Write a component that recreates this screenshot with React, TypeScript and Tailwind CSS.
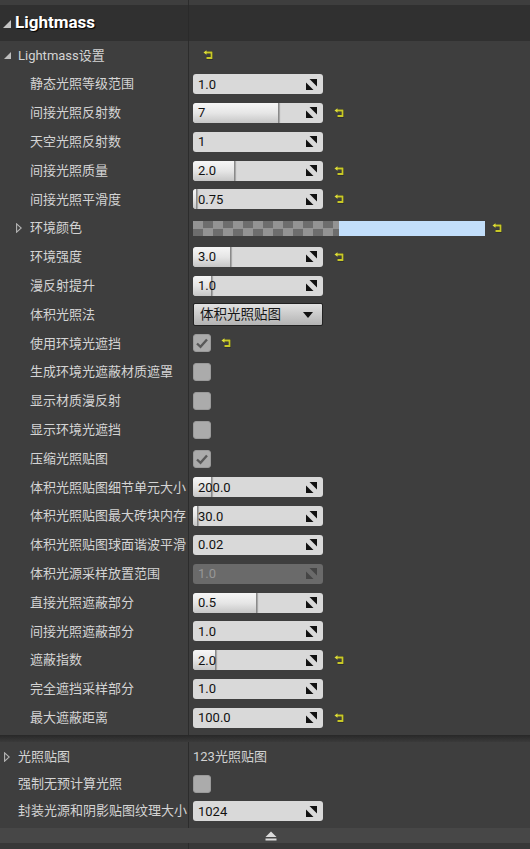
import React from 'react';

type Field =
  | { kind: 'num'; value: string; fill?: number; disabled?: boolean }
  | { kind: 'check'; checked: boolean }
  | { kind: 'color' }
  | { kind: 'combo'; value: string }
  | { kind: 'text'; value: string };

type Row = {
  label: string;
  level: number;
  arrow?: 'open' | 'closed';
  field?: Field;
  reset?: boolean;
};

const lightmassRows: Row[] = [
  { label: 'Lightmass设置', level: 1, arrow: 'open', reset: true },
  { label: '静态光照等级范围', level: 2, field: { kind: 'num', value: '1.0' } },
  { label: '间接光照反射数', level: 2, field: { kind: 'num', value: '7', fill: 86 }, reset: true },
  { label: '天空光照反射数', level: 2, field: { kind: 'num', value: '1' } },
  { label: '间接光照质量', level: 2, field: { kind: 'num', value: '2.0', fill: 42 }, reset: true },
  { label: '间接光照平滑度', level: 2, field: { kind: 'num', value: '0.75', fill: 4 }, reset: true },
  { label: '环境颜色', level: 2, arrow: 'closed', field: { kind: 'color' }, reset: true },
  { label: '环境强度', level: 2, field: { kind: 'num', value: '3.0', fill: 38 }, reset: true },
  { label: '漫反射提升', level: 2, field: { kind: 'num', value: '1.0', fill: 19 } },
  { label: '体积光照法', level: 2, field: { kind: 'combo', value: '体积光照贴图' } },
  { label: '使用环境光遮挡', level: 2, field: { kind: 'check', checked: true }, reset: true },
  { label: '生成环境光遮蔽材质遮罩', level: 2, field: { kind: 'check', checked: false } },
  { label: '显示材质漫反射', level: 2, field: { kind: 'check', checked: false } },
  { label: '显示环境光遮挡', level: 2, field: { kind: 'check', checked: false } },
  { label: '压缩光照贴图', level: 2, field: { kind: 'check', checked: true } },
  { label: '体积光照贴图细节单元大小', level: 2, field: { kind: 'num', value: '200.0', fill: 19 } },
  { label: '体积光照贴图最大砖块内存', level: 2, field: { kind: 'num', value: '30.0', fill: 5 } },
  { label: '体积光照贴图球面谐波平滑', level: 2, field: { kind: 'num', value: '0.02' } },
  { label: '体积光源采样放置范围', level: 2, field: { kind: 'num', value: '1.0', disabled: true } },
  { label: '直接光照遮蔽部分', level: 2, field: { kind: 'num', value: '0.5', fill: 64 } },
  { label: '间接光照遮蔽部分', level: 2, field: { kind: 'num', value: '1.0' } },
  { label: '遮蔽指数', level: 2, field: { kind: 'num', value: '2.0', fill: 23 }, reset: true },
  { label: '完全遮挡采样部分', level: 2, field: { kind: 'num', value: '1.0' } },
  { label: '最大遮蔽距离', level: 2, field: { kind: 'num', value: '100.0' }, reset: true },
];

const ResetArrow = () => (
  <svg width="10" height="10" viewBox="0 0 10 10" className="shrink-0">
    <path d="M3 2.5H8.5V8.2H3.5" stroke="#1e1e1e" strokeWidth="3" fill="none" opacity="0.5" />
    <path d="M3 2.5H8.5V8H3.5" stroke="#c8c826" strokeWidth="1.8" fill="none" />
    <polygon points="0.5,2.5 3.5,0.3 3.5,4.7" fill="#dede3a" />
  </svg>
);

const Spinner = ({ muted }: { muted?: boolean }) => (
  <svg width="11" height="11" viewBox="0 0 11 11" className="shrink-0">
    <g fill={muted ? '#454545' : '#111'}>
      <polygon points="3.5,0 11,0 11,7.5" />
      <polygon points="0,3.5 0,11 7.5,11" />
    </g>
  </svg>
);

const Arrow = ({ open }: { open: boolean }) =>
  open ? (
    <svg width="7" height="7" viewBox="0 0 7 7" className="shrink-0">
      <polygon points="7,0 7,7 0,7" fill="#bdbdbd" />
    </svg>
  ) : (
    <svg width="6" height="10" viewBox="0 0 6 10" className="shrink-0">
      <polygon points="0.6,0.8 5.3,5 0.6,9.2" fill="none" stroke="#b5b5b5" strokeWidth="1.1" />
    </svg>
  );

const NumBox = ({ value, fill, disabled }: { value: string; fill?: number; disabled?: boolean }) => (
  <div
    className={`relative w-[130px] h-[20px] rounded-[3px] flex items-center justify-between pl-[5px] pr-[6px] overflow-hidden ${
      disabled ? 'bg-[#6a6a6a]' : 'bg-[#d9d9d9]'
    }`}
  >
    {fill ? (
      <div
        className="absolute left-0 top-0 bottom-0 rounded-l-[3px] bg-gradient-to-b from-[#f6f6f6] via-[#e6e6e6] to-[#c6c6c6] border-r border-[#8a8a8a] shadow-[1px_0_1px_rgba(0,0,0,0.25)]"
        style={{ width: fill }}
      />
    ) : null}
    <span className={`relative text-[13px] leading-none ${disabled ? 'text-[#979797]' : 'text-[#111]'}`}>{value}</span>
    <span className="relative">
      <Spinner muted={disabled} />
    </span>
  </div>
);

const CheckBox = ({ checked }: { checked: boolean }) => (
  <div className="w-[18px] h-[18px] rounded-[3px] bg-[#ababab] border border-[#9a9a9a] flex items-center justify-center">
    {checked && (
      <svg width="14" height="12" viewBox="0 0 14 12">
        <path d="M2 6.5L5.5 9.8L12 2.5" stroke="#595959" strokeWidth="2.4" fill="none" />
      </svg>
    )}
  </div>
);

const ColorSwatch = () => (
  <div className="flex w-[292px] h-[15px]">
    <div className="w-[146px] h-full bg-[repeating-conic-gradient(#6d6d6d_0_25%,#939393_0_50%)] bg-size-[20px_15px]" />
    <div className="flex-1 h-full bg-[#c2defa]" />
  </div>
);

const Combo = ({ value }: { value: string }) => (
  <div className="w-[130px] h-[23px] rounded-[2px] border border-[#222] bg-gradient-to-b from-[#e2e2e2] to-[#b3b3b3] flex items-center justify-between pl-[6px] pr-[9px]">
    <span className="text-[13.5px] text-[#161616] leading-none">{value}</span>
    <svg width="10" height="6" viewBox="0 0 10 6">
      <polygon points="0,0 10,0 5,6" fill="#111" />
    </svg>
  </div>
);

const FieldView = ({ field }: { field: Field }) => {
  switch (field.kind) {
    case 'num':
      return <NumBox value={field.value} fill={field.fill} disabled={field.disabled} />;
    case 'check':
      return <CheckBox checked={field.checked} />;
    case 'color':
      return <ColorSwatch />;
    case 'combo':
      return <Combo value={field.value} />;
    case 'text':
      return <span className="text-[13px] text-[#d2d2d2]">{field.value}</span>;
  }
};

const PropRow = ({ row, height }: { row: Row; height: string }) => {
  const gap = row.field?.kind === 'color' ? 'gap-[7px]' : row.field?.kind === 'check' ? 'gap-[10px]' : 'gap-[11px]';
  return (
    <div className={`flex ${height}`}>
      <div className="w-[189px] shrink-0 border-r border-[#2c2c2c] flex items-center">
        <div className={`flex items-center ${row.level === 1 ? 'pl-[4px]' : 'pl-[16px]'}`}>
          <span className="w-[14px] flex">{row.arrow && <Arrow open={row.arrow === 'open'} />}</span>
          <span className="text-[13px] text-[#d4d4d4] whitespace-nowrap">{row.label}</span>
        </div>
      </div>
      <div className={`flex-1 flex items-center ${gap} ${row.field ? 'pl-[4px]' : 'pl-[14px]'}`}>
        {row.field && <FieldView field={row.field} />}
        {row.reset && <ResetArrow />}
      </div>
    </div>
  );
};

export default function App() {
  return (
    <div className='w-[530px] h-[849px] overflow-hidden bg-[#3e3e3e] flex flex-col font-[Roboto,"Noto_Sans_CJK_SC",sans-serif]'>
      <div className="h-[5px] flex shrink-0">
        <div className="w-[189px] border-r border-[#2c2c2c]" />
      </div>
      <div className="h-[36px] shrink-0 bg-[#303030] flex">
        <div className="w-[189px] border-r border-[#2a2a2a] flex items-center pl-[3px] gap-[4px]">
          <svg width="8" height="8" viewBox="0 0 8 8" className="mt-[1px]">
            <polygon points="8,0 8,8 0,8" fill="#c4c4c4" />
          </svg>
          <span className="text-[17px] font-bold text-white [text-shadow:1px_1px_1px_#000]">Lightmass</span>
        </div>
      </div>
      <div className="flex flex-col shrink-0">
        {lightmassRows.map((r) => (
          <PropRow key={r.label} row={r} height="h-[28.8px]" />
        ))}
        <div className="h-[3px] flex">
          <div className="w-[189px] border-r border-[#2c2c2c]" />
        </div>
      </div>
      <div className="h-[7px] shrink-0 bg-gradient-to-b from-[#282828] to-[#3a3a3a]" />
      <div className="flex flex-col shrink-0">
        <PropRow row={{ label: '光照贴图', level: 1, arrow: 'closed', field: { kind: 'text', value: '123光照贴图' } }} height="h-[29px]" />
        <PropRow row={{ label: '强制无预计算光照', level: 1, field: { kind: 'check', checked: false } }} height="h-[26px]" />
        <PropRow row={{ label: '封装光源和阴影贴图纹理大小', level: 1, field: { kind: 'num', value: '1024' } }} height="h-[28px]" />
        <div className="h-[3px] flex">
          <div className="w-[189px] border-r border-[#2c2c2c]" />
        </div>
      </div>
      <div className="h-[15px] shrink-0 bg-[#474747] flex items-center justify-center pl-[11px]">
        <svg width="12" height="10" viewBox="0 0 12 10">
          <polygon points="0.5,6 6,0.5 11.5,6" fill="#dcdcdc" />
          <rect x="0.5" y="7.5" width="11" height="2" fill="#dcdcdc" />
        </svg>
      </div>
      <div className="flex-1 flex bg-[#383838]">
        <div className="w-[189px] border-r border-[#2c2c2c]" />
      </div>
    </div>
  );
}
